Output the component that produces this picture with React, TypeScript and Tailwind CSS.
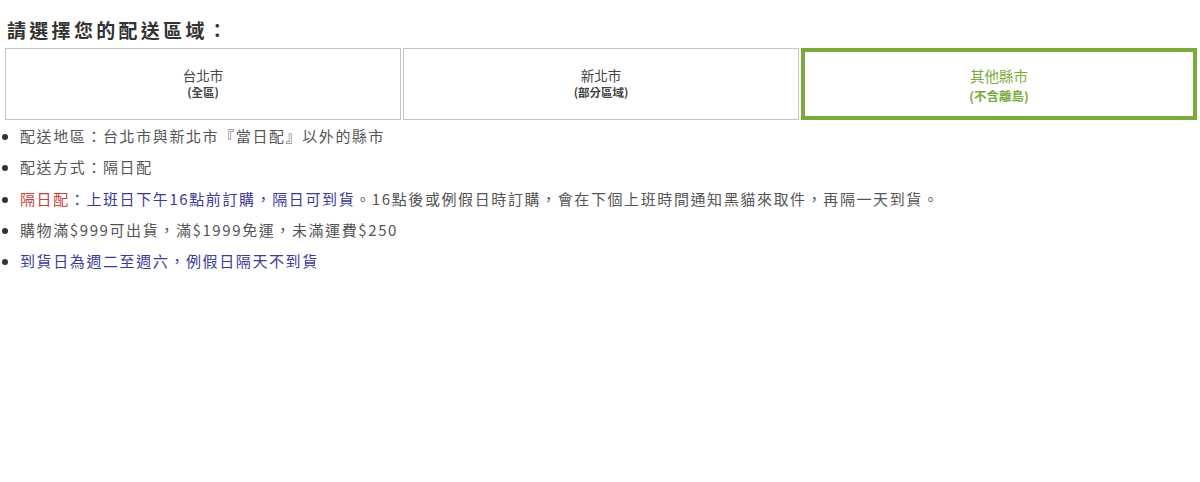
import React, { useState } from 'react';

const areas = [
  { name: '台北市', note: '(全區)' },
  { name: '新北市', note: '(部分區域)' },
  { name: '其他縣市', note: '(不含離島)' },
];

const App: React.FC = () => {
  const [active, setActive] = useState(2);

  return (
    <div className="min-h-screen bg-white pt-[18px] font-['Noto_Sans_CJK_TC','Noto_Sans',sans-serif]">
      <h2 className="pl-[7px] text-[19px] font-bold leading-[24px] tracking-[3.3px] text-[#333]">
        請選擇您的配送區域：
      </h2>

      <div className="mt-[6px] grid grid-cols-3 gap-[2px] pl-[5px] pr-[3px]">
        {areas.map((a, i) => {
          const on = i === active;
          return (
            <button
              key={a.name}
              onClick={() => setActive(i)}
              className={
                on
                  ? 'flex h-[72px] flex-col items-center justify-center border-[4px] border-[#7aab3c] pt-[4px] text-[#7aab3c]'
                  : 'flex h-[72px] flex-col items-center justify-center border border-[#c4c4c4] pb-[2px] text-[#444]'
              }
            >
              <span className={on ? 'text-[14.5px] leading-[20px]' : 'text-[13.5px] leading-[18px]'}>{a.name}</span>
              <span className={on ? 'text-[12.5px] font-bold leading-[20px]' : 'text-[11.5px] font-bold leading-[16px]'}>
                {a.note}
              </span>
            </button>
          );
        })}
      </div>

      <ul className="mt-0 list-disc pl-[20px] text-[15px] leading-[31.3px] tracking-[1.6px] text-[#555] marker:text-[#333]">
        <li>配送地區：台北市與新北市『當日配』以外的縣市</li>
        <li>配送方式：隔日配</li>
        <li>
          <span className="text-[#c8413a]">隔日配</span>
          <span className="text-[#3a3a9c]">：上班日下午16點前訂購，隔日可到貨</span>
          。16點後或例假日時訂購，會在下個上班時間通知黑貓來取件，再隔一天到貨。
        </li>
        <li>購物滿$999可出貨，滿$1999免運，未滿運費$250</li>
        <li className="text-[#3a3a9c]">到貨日為週二至週六，例假日隔天不到貨</li>
      </ul>
    </div>
  );
};

export default App;
